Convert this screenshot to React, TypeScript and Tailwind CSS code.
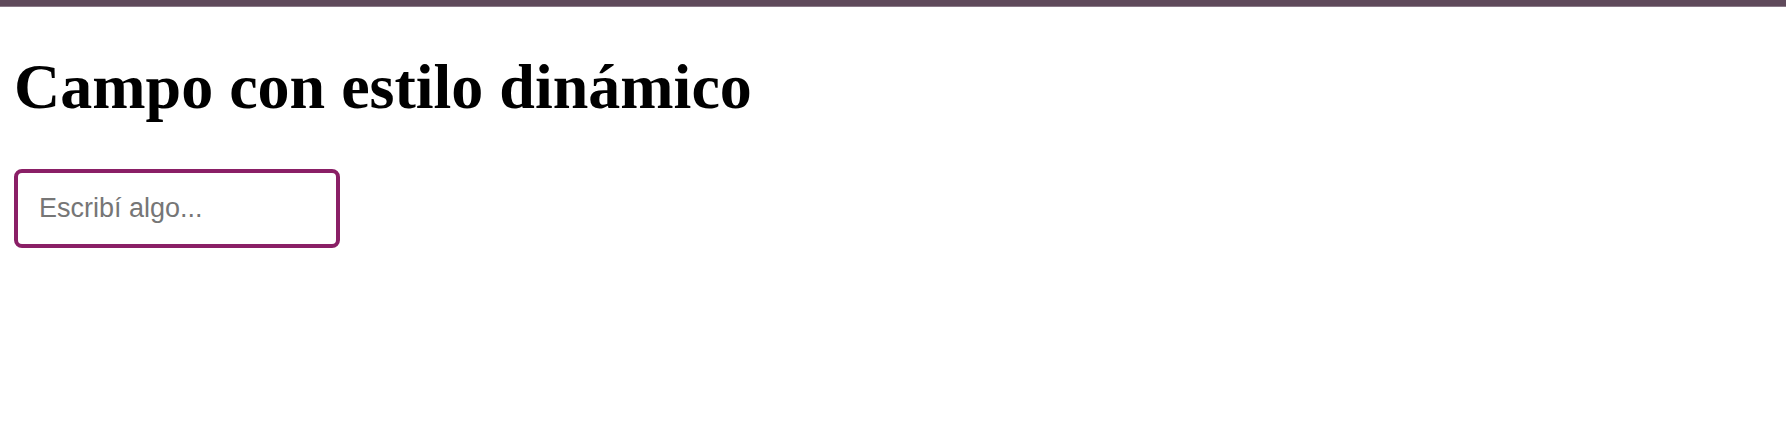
export default function App() {
  return (
    <div className="min-h-screen bg-white">
      <div className="h-[7px] bg-[#5f4a5b] border-b border-[#8a7a88]" />
      <div className="px-[14px]">
        <h1 className="mt-[43px] text-[64px] leading-[1.15] font-bold text-black [font-family:'Liberation_Serif',serif]">
          Campo con estilo dinámico
        </h1>
        <input
          type="text"
          autoFocus
          placeholder="Escribí algo..."
          className="mt-[45px] block w-[326px] h-[79px] border-4 border-[#8a1f66] rounded-[8px] pl-[21px] text-[27px] text-black placeholder:text-[#767676] caret-black outline-none [font-family:'Liberation_Sans',Arial,sans-serif]"
        />
      </div>
    </div>
  );
}
